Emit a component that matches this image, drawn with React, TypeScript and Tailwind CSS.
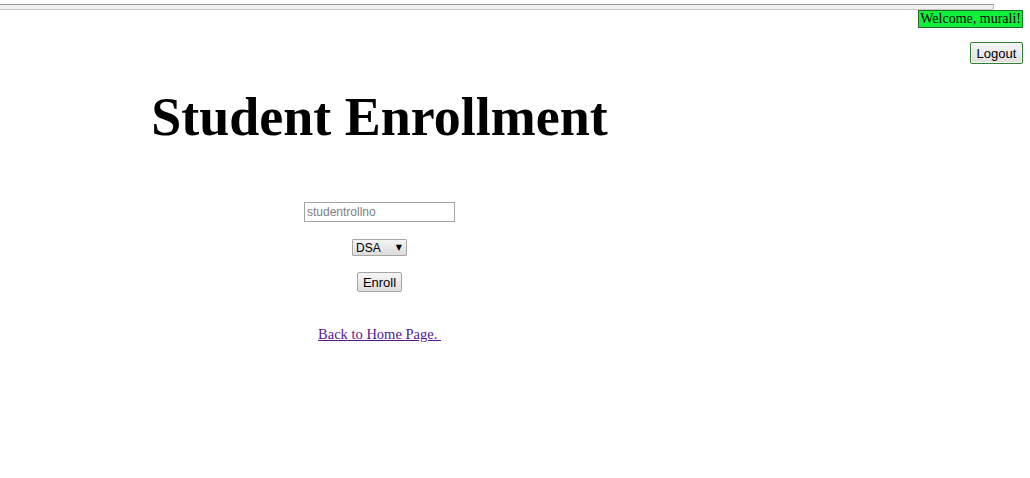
import React from 'react'

const App = () => {
  return (
    <div className="min-h-screen bg-white font-['Liberation_Serif',serif] text-black">
      {/* scrolled-off bar at the very top */}
      <div className="mt-[4px] h-[6px] w-[994px] rounded-br-[3px] border border-l-0 border-t-[#9a9a9a] border-r-[#b5b5b5] border-b-[#c4c4c4] bg-[#f0f0f0]" />

      {/* user box */}
      <div className="flex flex-col items-end pr-[7px]">
        <span className="border border-[#1f6f1f] bg-[#10f03c] px-px text-[14px] leading-[16px]">
          Welcome, murali!
        </span>
        <button className="mt-[14px] h-[22px] w-[53px] rounded-[2px] border border-[#2f7f2f] bg-gradient-to-b from-[#f6f6f6] to-[#dedede] font-['Liberation_Sans',sans-serif] text-[13px] leading-none shadow-[inset_0_0_0_1px_#f8f8f8]">
          Logout
        </button>
      </div>

      {/* enrollment form */}
      <div className="flex w-[759px] flex-col items-center text-center">
        <h1 className="mt-[26px] text-[54px] font-bold leading-none">Student Enrollment</h1>

        <input
          type="text"
          placeholder="studentrollno"
          className="mt-[58px] h-[20px] w-[151px] border border-[#a3a3a3] px-[2px] font-['Liberation_Sans',sans-serif] text-[12px] outline-none placeholder:text-[#808080]"
        />

        <div className="relative mt-[17px] flex">
          <select className="h-[17px] w-[55px] appearance-none rounded-[1px] border border-[#a6a6a6] bg-gradient-to-b from-[#f4f4f4] to-[#dcdcdc] pl-[3px] font-['Liberation_Sans',sans-serif] text-[12px] leading-none outline-none">
            <option>DSA</option>
          </select>
          <span className="pointer-events-none absolute right-[5px] top-[2px] font-['DejaVu_Sans',sans-serif] text-[8px] leading-[13px]">▼</span>
        </div>

        <button className="mt-[16px] h-[20px] w-[45px] rounded-[2px] border border-[#a6a6a6] bg-gradient-to-b from-[#f6f6f6] to-[#dddddd] font-['Liberation_Sans',sans-serif] text-[13px] leading-none">
          Enroll
        </button>

        <a href="#" className="mt-[34px] text-[14.5px] leading-4 text-[#551a8b] underline">
          Back to Home Page.&nbsp;
        </a>
      </div>
    </div>
  )
}

export default App
